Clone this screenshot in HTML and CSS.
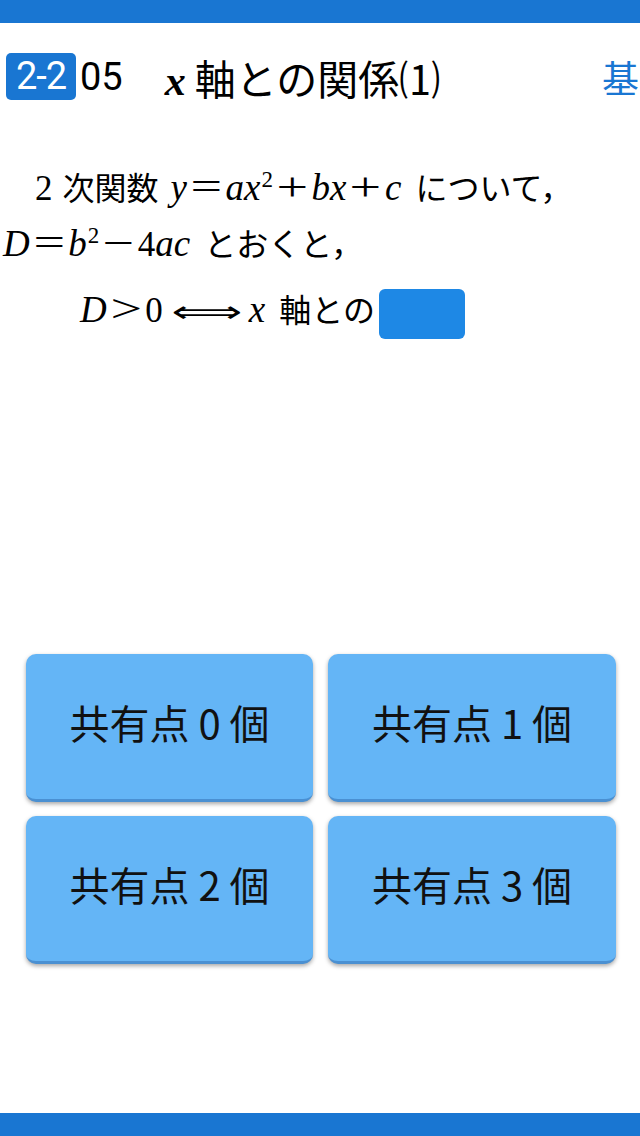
FILE: index.html
```html
<!DOCTYPE html>
<html lang="ja">
<head>
    <meta charset="UTF-8">
    <meta name="viewport" content="width=device-width, initial-scale=1.0">
    <title>x軸との関係(1)</title>
    <link rel="stylesheet" href="styles.css">
</head>
<body>

    <div class="topbar"></div>

    <div class="header">
        <span class="badge">2-2</span>
        <span class="num">05</span>
        <span class="title"><i class="var-bold">x</i>軸との関係⑴</span>
        <span class="level">基</span>
    </div>

    <div class="question">
        <div class="line line1">2<span class="jp gap-s">次関数</span><i>y</i><span class="op">=</span><i>ax</i><sup>2</sup><span class="op">+</span><i>bx</i><span class="op">+</span><i>c</i><span class="jp gap">について，</span></div>
        <div class="line line2"><i>D</i><span class="op">=</span><i>b</i><sup>2</sup><span class="op">−</span>4<i>ac</i><span class="jp gap">とおくと，</span></div>
        <div class="line line3"><i>D</i><span class="op">&gt;</span>0<span class="arrow"><span>⟺</span></span><i>x</i><span class="jp gap">軸との</span><span class="blank"></span></div>
    </div>

    <div class="choices">
        <button class="choice">共有点 0 個</button>
        <button class="choice">共有点 1 個</button>
        <button class="choice">共有点 2 個</button>
        <button class="choice">共有点 3 個</button>
    </div>

    <div class="bottombar"></div>

</body>
</html>
```

FILE: styles.css
```css
html, body {
    margin: 0;
    padding: 0;
}
body {
    width: 640px;
    min-height: 1136px;
    display: flex;
    flex-direction: column;
    background: #fff;
    font-family: Roboto, "Noto Sans CJK JP", sans-serif;
    color: #000;
    overflow: hidden;
}
.topbar, .bottombar {
    height: 23px;
    background-color: #1976D2;
    flex-shrink: 0;
}
.bottombar {
    margin-top: auto;
}
.header {
    display: flex;
    align-items: center;
    height: 47px;
    margin-top: 30px;
    padding-left: 6px;
    font-size: 38px;
    white-space: nowrap;
}
.badge {
    display: inline-block;
    height: 47px;
    line-height: 47px;
    width: 70px;
    text-align: center;
    background-color: #1976D2;
    color: #fff;
    border-radius: 5px;
    letter-spacing: -1px;
}
.num {
    margin-left: 4px;
}
.title {
    margin-left: 42px;
    font-family: "Noto Sans CJK JP", sans-serif;
    font-size: 41px;
}
.var-bold {
    font-family: "Liberation Serif", serif;
    font-weight: bold;
    font-size: 42px;
    margin-right: 9px;
}
.level {
    margin-left: auto;
    width: 38px;
    color: #1976D2;
    font-family: "Noto Sans CJK JP", sans-serif;
    font-size: 37px;
}
.question {
    margin-top: 58px;
    font-family: "Liberation Serif", serif;
    font-size: 35px;
}
.question .line {
    height: 56px;
    line-height: 56px;
    white-space: nowrap;
}
.question i {
    font-size: 37px;
}
.question .jp {
    font-family: "Noto Sans CJK JP", sans-serif;
    font-size: 32px;
}
.question sup {
    font-size: 23px;
    line-height: 0;
    margin-left: 1px;
}
.line1 {
    padding-left: 35px;
}
.line2 {
    padding-left: 3px;
}
.line3 {
    padding-left: 80px;
    margin-top: 10px;
}
.gap {
    margin: 0 0 0 14px;
}
.gap-s {
    margin: 0 12px 0 10px;
}
.op {
    display: inline-block;
    margin: 0 8px;
    font-size: 40px;
    transform: scaleX(1.4);
}
.arrow {
    display: inline-block;
    width: 72px;
    margin: 0 6px 0 8px;
    font-family: "DejaVu Sans", sans-serif;
    font-size: 30px;
}
.arrow span {
    display: inline-block;
    transform: scaleX(1.65);
    transform-origin: left center;
}
.blank {
    display: inline-block;
    width: 86px;
    height: 50px;
    margin-left: 4px;
    vertical-align: middle;
    background-color: #1E88E5;
    border-radius: 6px;
}
.choices {
    display: grid;
    grid-template-columns: 287px 288px;
    grid-auto-rows: 148px;
    column-gap: 15px;
    row-gap: 14px;
    margin-top: 318px;
    padding-left: 26px;
}
.choice {
    background-color: #64B5F6;
    border: none;
    border-bottom: 3px solid #4A90D2;
    border-radius: 10px;
    box-shadow: 0 2px 4px rgba(0, 0, 0, 0.35);
    font-family: "Noto Sans CJK JP", serif;
    font-size: 40px;
    color: #111;
    padding: 0 0 10px;
    cursor: pointer;
}
```
